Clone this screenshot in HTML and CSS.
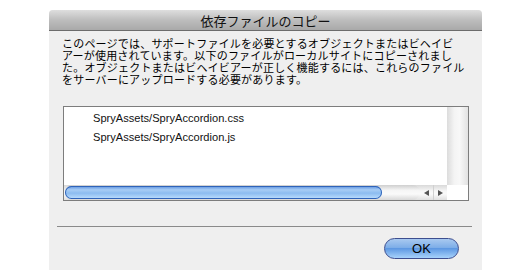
FILE: index.html
```html
<!DOCTYPE html>
<html lang="ja">
<head>
<meta charset="utf-8">
<link rel="stylesheet" href="styles.css">
</head>
<body>
<div class="dialog">
  <div class="titlebar">依存ファイルのコピー</div>
  <div class="content">
    <p class="message">このページでは、サポートファイルを必要とするオブジェクトまたはビヘイビ<br>アーが使用されています。以下のファイルがローカルサイトにコピーされまし<br>た。オブジェクトまたはビヘイビアーが正しく機能するには、これらのファイル<br>をサーバーにアップロードする必要があります。</p>
    <div class="listbox">
      <div class="list">
        <div class="item">SpryAssets/SpryAccordion.css</div>
        <div class="item">SpryAssets/SpryAccordion.js</div>
      </div>
      <div class="vtrack"></div>
      <div class="hbar">
        <div class="htrack"><div class="thumb"></div></div>
        <div class="arrows">
          <span class="arr left"></span>
          <span class="arr right"></span>
        </div>
      </div>
      <div class="corner"></div>
    </div>
    <div class="sep"></div>
    <div class="buttons">
      <button class="ok">OK</button>
    </div>
  </div>
</div>
</body>
</html>
```
FILE: styles.css
```css
html, body {
  margin: 0;
  padding: 0;
  background: #ffffff;
}
body {
  width: 530px;
  height: 280px;
  overflow: hidden;
}
.dialog {
  margin: 10px 0 0 49px;
  width: 433px;
  height: 260px;
  background: #efefef;
  display: flex;
  flex-direction: column;
  border-radius: 4px 4px 0 0;
  overflow: hidden;
}
.titlebar {
  height: 20px;
  border-bottom: 1px solid #6c6c6c;
  background: linear-gradient(#dedede, #bdbdbd 50%, #a9a9a9);
  font-family: "Noto Sans CJK JP", sans-serif;
  font-size: 13px;
  line-height: 21px;
  text-align: center;
  color: #111;
}
.content {
  flex: 1;
  display: flex;
  flex-direction: column;
}
.message {
  margin: 6px 0 0 13px;
  font-family: "Noto Sans CJK JP", sans-serif;
  font-size: 11px;
  line-height: 12px;
  letter-spacing: 0.2px;
  color: #000;
  white-space: nowrap;
}
.listbox {
  margin: 21px 0 0 14px;
  width: 404px;
  height: 93px;
  border: 1px solid #7d7d7d;
  background: #fff;
  display: grid;
  grid-template-columns: 1fr 21px;
  grid-template-rows: 1fr 15px;
}
.list {
  padding: 4px 0 0 29px;
  font-family: "Liberation Sans", sans-serif;
  font-size: 11.1px;
  color: #111;
}
.item {
  height: 19px;
  line-height: 14px;
}
.vtrack {
  background: linear-gradient(90deg, #dcdcdc, #f4f4f4 35%, #f8f8f8 60%, #e2e2e2);
}
.hbar {
  display: flex;
  align-items: center;
  background: linear-gradient(#d9d9d9, #f6f6f6 40%, #fafafa 60%, #e0e0e0);
}
.htrack {
  width: 356px;
  height: 15px;
  border-radius: 8px;
  background: linear-gradient(#cfcfcf, #f5f5f5 35%, #fafafa 60%, #d8d8d8);
  position: relative;
}
.thumb {
  position: absolute;
  left: 1px;
  top: 1px;
  width: 317px;
  height: 13px;
  border-radius: 7px;
  background: linear-gradient(#5a8fde, #a8cdf5 30%, #8cbcf0 55%, #bfe0ff 100%);
  box-shadow: inset 0 0 0 1px #2f63b8;
}
.arrows {
  flex: 1;
  display: flex;
  height: 15px;
}
.arr {
  flex: 1;
  display: flex;
  align-items: center;
  justify-content: center;
}
.arr.left {
  border-right: 1px solid #d0d0d0;
}
.arr.left::after {
  content: "";
  border-style: solid;
  border-width: 3px 5px 3px 0;
  border-color: transparent #555 transparent transparent;
}
.arr.right::after {
  content: "";
  border-style: solid;
  border-width: 3px 0 3px 5px;
  border-color: transparent transparent transparent #555;
}
.corner {
  background: #fff;
}
.sep {
  margin: 25px 0 0 8px;
  width: 415px;
  height: 1px;
  background: #8a8a8a;
}
.buttons {
  display: flex;
  justify-content: flex-end;
  padding: 11px 23px 0 0;
}
.ok {
  width: 75px;
  height: 21px;
  border: 1px solid #3d4e8f;
  border-radius: 11px;
  background: linear-gradient(#a9c9f0, #7eaee8 45%, #5e98e2 50%, #a7d2fb 100%);
  font-family: "Liberation Sans", sans-serif;
  font-size: 13px;
  color: #000;
  padding: 0;
  line-height: 19px;
}
```
